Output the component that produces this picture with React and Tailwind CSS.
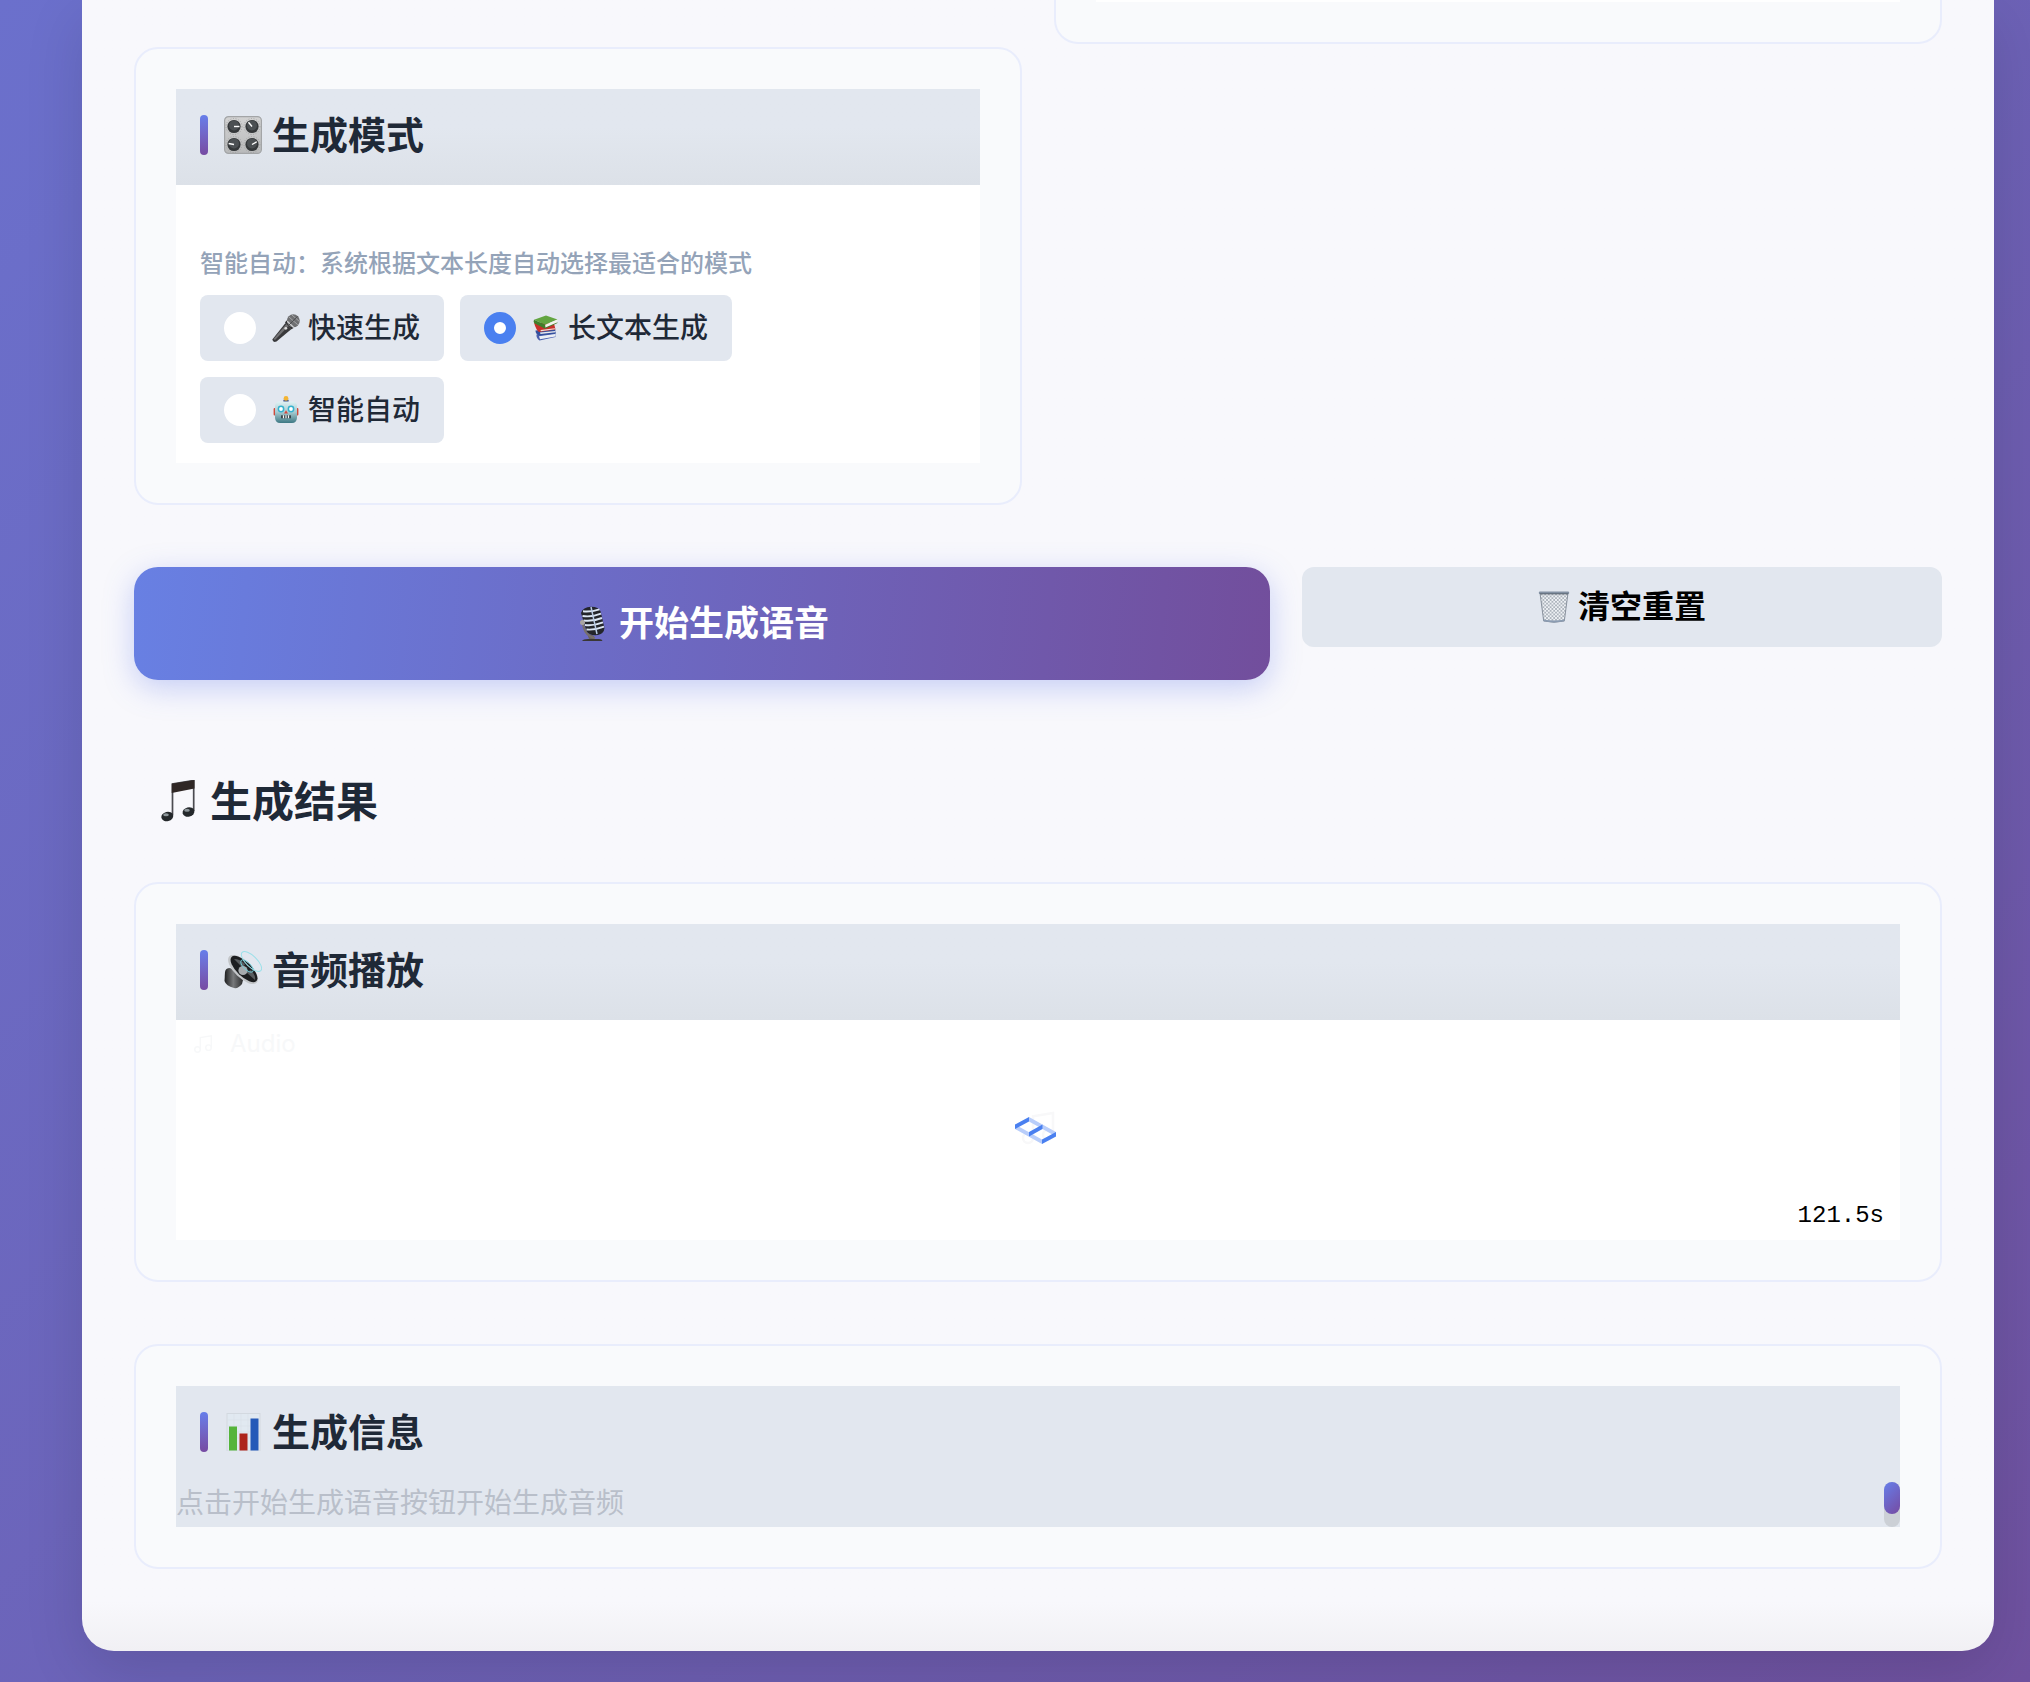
import { useState } from 'react';

const MODES = [
  { id: 'fast', label: '快速生成', Icon: MicIcon },
  { id: 'long', label: '长文本生成', Icon: BooksIcon },
  { id: 'auto', label: '智能自动', Icon: RobotIcon },
];

function Knob({ x, y, angle }) {
  return (
    <g>
      <circle cx={x} cy={y} r="8" fill="none" stroke="#9b9b9b" strokeWidth="0.8" strokeDasharray="1 1.6" />
      <circle cx={x} cy={y} r="6.6" fill="#35383a" />
      <circle cx={x} cy={y - 1} r="5" fill="#4c5053" />
      <path d={`M${x} ${y} h5.5`} stroke="#fff" strokeWidth="1.4" transform={`rotate(${angle} ${x} ${y})`} />
    </g>
  );
}

function KnobsIcon({ className }) {
  return (
    <svg viewBox="0 0 38 38" className={className} aria-hidden="true">
      <defs>
        <linearGradient id="knobs" x1="0" y1="0" x2="0" y2="1">
          <stop offset="0" stopColor="#d3d3d3" />
          <stop offset="1" stopColor="#b9babb" />
        </linearGradient>
      </defs>
      <rect x="0.6" y="0.6" width="36.8" height="36.8" rx="4" fill="url(#knobs)" stroke="#a3a5a7" strokeWidth="1.2" />
      <Knob x={10} y={10.5} angle={0} />
      <Knob x={28} y={10.5} angle={230} />
      <Knob x={10} y={28.5} angle={190} />
      <Knob x={28} y={28.5} angle={-30} />
    </svg>
  );
}

function MicIcon({ className }) {
  return (
    <svg viewBox="0 0 28 28" className={className} aria-hidden="true">
      <path d="M13.500 9 L19.500 15 L4.500 27.500 Q1 29 0.300 25.500 Z" fill="#39393b" />
      <path d="M14.500 10 L16.500 12 L3 26 L1.500 25 Z" fill="#727274" />
      <path d="M13 8.500 L19.500 15.300 L21.500 14 L14.500 6.500 Z" fill="#2c2c2e" />
      <circle cx="21.300" cy="6.800" r="6.500" fill="#6f7072" />
      <path d="M17 3 L25.800 10.800 M20 1 L27.500 7.600" stroke="#a5a6a8" strokeWidth="1" />
      <path d="M15.200 7.300 L21.500 13.200" stroke="#d1d2d4" strokeWidth="1.300" />
      <path d="M17 11 L25.500 2.300" stroke="#4c4d4f" strokeWidth="1" />
      <circle cx="13.800" cy="14.300" r="1.400" fill="#dedede" />
    </svg>
  );
}

function BooksIcon({ className }) {
  return (
    <svg viewBox="0 0 28 28" className={className} aria-hidden="true">
      <path d="M4.500 20.500 L23 18.500 L23.500 23 L7.500 26.500 Q4 24 4.500 20.500 Z" fill="#4a5fae" />
      <path d="M7 22.300 L23 20 L23.300 22.500 L8 25.300 Z" fill="#eceff5" />
      <path d="M3.500 16.500 L23 15 L24 19.400 L7 21.500 Q3.500 20 3.500 16.500 Z" fill="#34509e" />
      <path d="M8 18.600 L23.500 17 L23.700 18.300 L8.500 20 Z" fill="#e8e8ee" />
      <path d="M2 8.500 L22 9.500 L23.500 15.500 L7 18 Q4 16 2 8.500 Z" fill="#c8302a" />
      <path d="M8.500 16 L22.800 14.200 L23 15.200 L8.900 17.200 Z" fill="#f1dfd9" />
      <path d="M2 5.800 L14 1.500 L25.500 5.500 L13.200 10.800 Z" fill="#62a540" />
      <path d="M2 5.800 Q1 8 2.400 9.200 L13 14.800 L25.500 9 L25 8 L13.400 12.700 L13.200 10.800 Z" fill="#3f7f2b" />
      <path d="M13.200 10.800 L25.500 5.500 L25 8.600 L13.400 13.600 Z" fill="#f2f2ec" />
    </svg>
  );
}

function RobotIcon({ className }) {
  return (
    <svg viewBox="0 0 28 28" className={className} aria-hidden="true">
      <defs>
        <linearGradient id="robot" x1="0" y1="0" x2="0" y2="1">
          <stop offset="0" stopColor="#e0f1f3" />
          <stop offset="0.500" stopColor="#a5c9cf" />
          <stop offset="1" stopColor="#3d7984" />
        </linearGradient>
      </defs>
      <rect x="1.600" y="12" width="3" height="7.500" rx="1" fill="#cf4a3b" />
      <rect x="23.400" y="12" width="3" height="7.500" rx="1" fill="#cf4a3b" />
      <rect x="11.400" y="3.800" width="5.200" height="3.200" fill="#3b4f8c" />
      <circle cx="14" cy="2.400" r="2.400" fill="#f3b535" />
      <path d="M7 5.600 H21 Q25 6 25 10.500 V22 Q24.500 27 20 27 H8 Q3.500 27 3 22 V10.500 Q3 6 7 5.600 Z" fill="url(#robot)" />
      <circle cx="9" cy="13" r="3.400" fill="#35b2cf" />
      <circle cx="19" cy="13" r="3.400" fill="#35b2cf" />
      <circle cx="9" cy="13" r="1.900" fill="#fff" />
      <circle cx="19" cy="13" r="1.900" fill="#fff" />
      <path d="M14 14.300 L16 17.600 H12 Z" fill="#d6463a" />
      <rect x="9" y="19.300" width="10" height="3" fill="#37464b" />
      <path d="M11.500 19.300 V22.300 M14 19.300 V22.300 M16.500 19.300 V22.300" stroke="#f4f6f6" strokeWidth="1.200" />
    </svg>
  );
}

function StudioMicIcon({ className }) {
  return (
    <svg viewBox="0 0 36 36" className={className} aria-hidden="true">
      <path d="M12 27 L19 30 V33 H14 Z" fill="#6b6360" />
      <path d="M7 35 Q8 33 13 33 H24 Q27 33.200 27.500 35 Z" fill="#3a3735" />
      <path d="M7 14 L9 22 Q11 30 20 32" fill="none" stroke="#77706c" strokeWidth="2.200" />
      <path d="M6 7 Q8 1 16 0.800 Q24 0.800 25.600 5.500 L29.500 22 Q29 27.500 23 29 Q14 30 11.500 25 Z" fill="#23252b" />
      <path d="M8 5.300 Q15 6.300 24.500 3.300 M7.500 10 Q17 11.300 26 7.700 M8.500 14.500 Q18 15.600 27 12 M10 19 Q19 20 28 16.400 M11.500 23.500 Q20 24.300 29 20.700" fill="none" stroke="#dce6f4" strokeWidth="1.900" />
      <path d="M16 1 L22 28" stroke="#b9cbe4" strokeWidth="1.500" />
      <circle cx="7.500" cy="16.500" r="2.500" fill="#a9a5a3" />
    </svg>
  );
}

function TrashIcon({ className }) {
  return (
    <svg viewBox="0 0 32 32" className={className} aria-hidden="true">
      <defs>
        <pattern id="mesh" width="3.600" height="3.600" patternUnits="userSpaceOnUse">
          <path d="M0 0 L3.600 3.600 M3.600 0 L0 3.600" stroke="#8a939f" strokeWidth="0.600" />
        </pattern>
      </defs>
      <path d="M2 2 H30 L26.300 30 Q16 32.500 5.700 30 Z" fill="#f0f3f6" />
      <path d="M2 2 H30 L26.300 30 Q16 32.500 5.700 30 Z" fill="url(#mesh)" stroke="#7f8894" strokeWidth="0.900" />
      <path d="M5.400 28.500 Q16 30.500 26.600 28.500 L26.300 30.300 Q16 32.500 5.700 30.300 Z" fill="#8b9cb2" />
      <rect x="0.800" y="0.500" width="30.400" height="2.600" rx="1.200" fill="#8391a3" />
      <path d="M2 2.900 H30" stroke="#545c66" strokeWidth="0.900" />
    </svg>
  );
}

function NotesIcon({ className }) {
  return (
    <svg viewBox="0 0 42 42" className={className} aria-hidden="true">
      <path d="M14.500 35 V4 L35.700 0.500 V31" fill="none" stroke="#4b4b50" strokeWidth="1.700" />
      <path d="M13.700 3.800 L36.500 0 V8.500 L13.700 13 Z" fill="#2f2725" />
      <ellipse cx="9.300" cy="36.500" rx="6" ry="4.600" fill="#24282b" transform="rotate(-14 9.300 36.500)" />
      <ellipse cx="30.500" cy="32" rx="6" ry="4.600" fill="#24282b" transform="rotate(-14 30.500 32)" />
      <ellipse cx="8" cy="34.800" rx="2.800" ry="1.500" fill="#8c9599" />
      <ellipse cx="29" cy="30.200" rx="2.800" ry="1.500" fill="#8c9599" />
    </svg>
  );
}

function SpeakerIcon({ className }) {
  return (
    <svg viewBox="0 0 38 38" className={className} aria-hidden="true">
      <defs>
        <linearGradient id="speakerBox" x1="0" y1="0" x2="1" y2="0">
          <stop offset="0" stopColor="#1d1e1f" />
          <stop offset="0.450" stopColor="#77797b" />
          <stop offset="1" stopColor="#242526" />
        </linearGradient>
      </defs>
      <path d="M1 21 Q1.500 17 6 17 L20 25 L18 33 Q14 38 10 37 Q2 35 0.500 30 Z" fill="url(#speakerBox)" />
      <ellipse cx="19" cy="18.500" rx="19" ry="8.500" fill="#c3c6c9" transform="rotate(44 19 18.500)" />
      <ellipse cx="20" cy="18" rx="17.300" ry="7.200" fill="#1c1e20" transform="rotate(44 20 18)" />
      <path d="M19 17 L10 8 Q16 8 21 13 Z M22 21 L31 29 Q32 25 27 19 Z" fill="#585c5f" />
      <circle cx="19" cy="19.500" r="4.600" fill="#a6abae" />
      <ellipse cx="23" cy="15" rx="8" ry="3.600" fill="none" stroke="#71cfdd" strokeWidth="0.900" transform="rotate(44 23 15)" />
      <ellipse cx="27.500" cy="10.500" rx="13" ry="5.500" fill="none" stroke="#9be0e9" strokeWidth="1" transform="rotate(44 27.500 10.500)" />
    </svg>
  );
}

function ChartIcon({ className }) {
  return (
    <svg viewBox="0 0 38 38" className={className} aria-hidden="true">
      <rect x="3" y="0.500" width="33" height="37.500" fill="#e1e9f1" stroke="#d3d9e0" strokeWidth="1" />
      <path d="M3 7 H36 M3 13 H36 M3 19 H36 M3 25 H36 M10 1 V38 M17 1 V38 M24 1 V38" stroke="#d9e0e8" strokeWidth="0.600" />
      <rect x="5" y="13.500" width="8" height="24" fill="#55b43b" />
      <rect x="15.500" y="20.500" width="8" height="17" fill="#ad241b" />
      <rect x="26.500" y="5.500" width="8" height="32" fill="#2459b8" />
    </svg>
  );
}

function NoteOutline({ className }) {
  return (
    <svg viewBox="0 0 24 24" className={className} fill="none" stroke="currentColor" strokeWidth="1.5" aria-hidden="true">
      <path d="M9 18V5l12-2v13" />
      <circle cx="6" cy="18" r="3" />
      <circle cx="18" cy="16" r="3" />
    </svg>
  );
}

function Loader() {
  return (
    <svg viewBox="0 0 41 27" className="absolute inset-y-0 right-1/2 my-auto -mr-[18px] w-[41px] h-[27px]" aria-hidden="true">
      <path d="M14 0 L41 15 V19.500 L14 4.500 Z M0 7.500 L27 22.500 V27 L0 12 Z" fill="#b8cdfa" />
      <path d="M0 7.500 L14 0 V4.500 L0 12 Z M14 15 L27.500 7.500 V12 L14 19.500 Z M27 22.500 L41 15 V19.500 L27 27 Z" fill="#4a80f0" />
    </svg>
  );
}

function Card({ className = '', children }) {
  return (
    <section className={`rounded-3xl border-2 border-[#e9edfc] bg-[#f9fafc] p-10 ${className}`}>
      {children}
    </section>
  );
}

function CardTitle({ Icon, shaded, children }) {
  return (
    <h3 className={`flex h-24 items-center bg-[#e2e7ef] px-6 pb-1 text-[38px] font-bold text-[#1f2937] ${shaded ? 'bg-linear-to-b from-[#e2e7ef] from-40% to-[#dce1e8]' : ''}`}>
      <span className="mr-4 h-10 w-2 rounded-full bg-linear-to-b from-[#667eea] to-[#764ba2]" />
      <Icon className="mr-2.5 size-[38px]" />
      {children}
    </h3>
  );
}

export default function App() {
  const [mode, setMode] = useState('long');

  return (
    <div className="min-h-screen bg-linear-[135deg,#6b70cc,#6c63b8_50%,#6f519f] pr-9 pb-[31px] pl-[82px] font-['Inter','Noto_Sans_CJK_SC',sans-serif]">
      <main className="rounded-b-[32px] bg-linear-to-b from-[#f8f8fc] from-97% to-[#f1f0f4] px-[52px] pb-[82px] shadow-[0_20px_60px_rgba(0,0,0,0.12)]">
        <div className="grid grid-cols-2 items-start gap-8">
          {/* Mode selection */}
          <Card className="mt-[47px]">
            <CardTitle Icon={KnobsIcon} shaded>生成模式</CardTitle>
            <fieldset className="bg-white px-6 pt-[61px] pb-5">
              <p className="mb-[13px] text-2xl leading-9 font-medium text-[#94a3b8]">智能自动：系统根据文本长度自动选择最适合的模式</p>
              <div className="flex flex-wrap gap-4">
                {MODES.map(({ id, label, Icon }) => (
                  <label key={id} className="flex h-[66px] cursor-pointer items-center rounded-lg bg-[#e2e7ef] px-6 text-[28px] font-medium text-[#1f2937]">
                    <input
                      type="radio"
                      name="mode"
                      value={id}
                      checked={mode === id}
                      onChange={() => setMode(id)}
                      className="mr-4 size-8 appearance-none rounded-full bg-white checked:border-10 checked:border-[#4a80f0]"
                    />
                    <Icon className="mr-2 size-7" />
                    {label}
                  </label>
                ))}
              </div>
            </fieldset>
          </Card>

          {/* Tail of the settings card */}
          <Card className="rounded-t-none border-t-0 pt-0">
            <div className="h-0.5 bg-white" />
          </Card>
        </div>

        {/* Actions */}
        <div className="mt-[62px] flex items-start gap-8">
          <button className="flex h-[113px] flex-2 items-center justify-center rounded-3xl bg-linear-[95deg,#6880e3,#724e9c] text-[35px] font-bold text-white shadow-[0_8px_30px_rgba(102,126,234,0.35)]">
            <StudioMicIcon className="mr-2 size-9" />
            开始生成语音
          </button>
          <button className="flex h-20 min-w-[640px] flex-1 items-center justify-center rounded-xl bg-[#e2e7ef] text-[32px] font-bold text-black">
            <TrashIcon className="mr-2 size-8" />
            清空重置
          </button>
        </div>

        <h2 className="mt-[90px] mb-[50px] flex h-[62px] items-center px-6 text-[42px] font-bold text-[#1f2937]">
          <NotesIcon className="mr-2.5 size-[42px]" />
          生成结果
        </h2>

        {/* Audio player */}
        <Card>
          <CardTitle Icon={SpeakerIcon} shaded>音频播放</CardTitle>
          <div className="flex h-[220px] flex-col justify-between bg-white px-4 py-2">
            <div className="flex h-8 items-center gap-4 font-['Inter',sans-serif] text-2xl text-[#f7f8f9]">
              <NoteOutline className="size-[22px]" />
              Audio
            </div>
            <div className="relative flex items-center justify-center pb-1 text-[#f8f8f9]">
              <NoteOutline className="size-10" />
              <Loader />
            </div>
            <div className="text-right font-['Liberation_Mono',monospace] text-2xl leading-8 text-black">121.5s</div>
          </div>
        </Card>

        {/* Generation info */}
        <Card className="mt-[62px]">
          <CardTitle Icon={ChartIcon}>生成信息</CardTitle>
          <div className="flex bg-[#e2e7ef]">
            <textarea
              readOnly
              rows={1}
              aria-label="生成信息"
              placeholder="点击开始生成语音按钮开始生成音频"
              className="h-[45px] flex-1 resize-none overflow-hidden text-[28px] leading-[42px] outline-none placeholder:text-[#b9bfca]"
            />
            <div className="h-[45px] w-4 rounded-full bg-[#ccd0d6]">
              <div className="h-8 rounded-full bg-linear-[135deg,#667eea,#764ba2]" />
            </div>
          </div>
        </Card>
      </main>
    </div>
  );
}
